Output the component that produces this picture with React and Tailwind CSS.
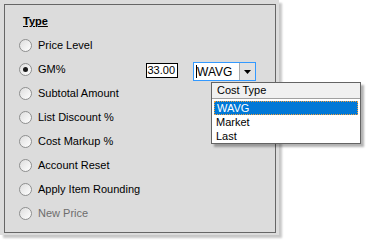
import React from 'react';

const options = [
  { label: 'Price Level' },
  { label: 'GM%', checked: true, extra: true },
  { label: 'Subtotal Amount' },
  { label: 'List Discount %' },
  { label: 'Cost Markup %' },
  { label: 'Account Reset' },
  { label: 'Apply Item Rounding' },
  { label: 'New Price', disabled: true },
];

const Radio = ({ checked }) => (
  <span className="relative w-[13px] h-[13px] shrink-0 rounded-full border border-[#8e8f8f] bg-gradient-to-br from-[#dedede] to-white flex items-center justify-center">
    {checked && <span className="w-[5px] h-[5px] rounded-full bg-[#1a1a1a]" />}
  </span>
);

const App = () => {
  return (
    <div className="relative w-[368px] h-[243px] bg-white text-[11px] text-black" style={{ fontFamily: '"Liberation Sans", Arial, sans-serif' }}>
      {/* Group panel */}
      <div className="w-[279px] h-[235px] bg-[#dcdcdc] p-[4px] shadow-[3px_3px_2px_rgba(0,0,0,0.22)]">
        <div className="h-[229px] w-[272px] border border-[#666666] pl-[14px] pt-[4px]">
          <div className="h-[24px] flex items-center">
            <span className="ml-[4px] font-bold underline underline-offset-1">Type</span>
          </div>
          {options.map((o) => (
            <div key={o.label} className="h-[24px] flex items-center">
              <Radio checked={o.checked} />
              <span className={`ml-[6px] ${o.disabled ? 'text-[#6d6d6d]' : ''} ${o.extra ? 'w-[108px]' : ''}`}>
                {o.label}
              </span>
              {o.extra && (
                <>
                  <div className="self-start mt-[6px] w-[32px] h-[15px] border border-black bg-white flex items-center justify-end pr-[2px] leading-none">
                    33.00
                  </div>
                  <div className="self-start mt-[5px] ml-[15px] w-[63px] h-[19px] border border-[#3399ff] bg-white flex">
                    <div className="flex-1 flex items-center pl-[2px] text-[12px]">
                      <span className="w-px h-[13px] bg-black" />
                      <span>WAVG</span>
                    </div>
                    <div className="w-[16px] h-full bg-[#e1e1e1] border-l border-[#aaaaaa] flex items-center justify-center">
                      <svg width="7" height="4" viewBox="0 0 7 4">
                        <path d="M0 0h7L3.5 4z" fill="#000" />
                      </svg>
                    </div>
                  </div>
                </>
              )}
            </div>
          ))}
        </div>
      </div>

      {/* Dropdown list */}
      <div className="absolute left-[211px] top-[82px] w-[150px] h-[62px] bg-white border border-[#646464] shadow-[3px_3px_2px_rgba(0,0,0,0.3)]">
        <div className="h-[16px] bg-[#f0f0f0] border-b border-[#a0a0a0] flex items-center pl-[5px]">Cost Type</div>
        <div className="mt-[2px] mx-[2px] h-[14px] bg-[#0078d7] text-white border border-dotted border-[#f0a040] flex items-center pl-[2px]">WAVG</div>
        <div className="h-[14px] flex items-center pl-[4px]">Market</div>
        <div className="h-[14px] flex items-center pl-[4px]">Last</div>
      </div>
    </div>
  );
};

export default App;
